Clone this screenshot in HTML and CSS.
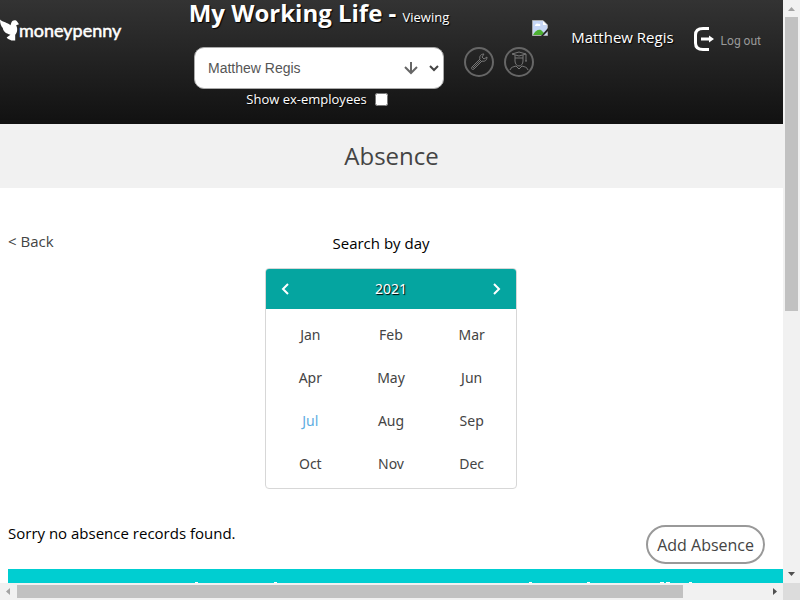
FILE: index.html
```html
<!DOCTYPE html>
<html lang="en">
<head>
<meta charset="utf-8">
<meta name="viewport" content="width=device-width, initial-scale=1">
<title>Absence</title>
<link rel="stylesheet" href="styles.css">
</head>
<body>
<div class="frame">
  <div class="page">
    <header class="top">
      <a class="logo" href="#" aria-label="Home">
        <svg class="bird" viewBox="0 0 20 22" aria-hidden="true"><path d="M0 0C3 3 8 3 11 6L12 3C13 0 17 0 18 2L20 5L17 6C19 10 18 14 16 16V22H12C10 21 8 21 7 19L11 16C6 15 3 12 3 9C1 7 0 4 0 0Z"/></svg>
        <span>moneypenny</span>
      </a>
      <div class="viewer">
        <h1>My Working Life - <small>Viewing</small></h1>
        <div class="picker">
          <select aria-label="Employee"><option>Matthew Regis</option></select>
          <svg class="arrows" viewBox="0 0 36 14" aria-hidden="true"><path d="M7 1V12M1 6L7 12L13 6"/><path class="chev" d="M26 5L30 9L34 5"/></svg>
        </div>
        <label class="ex">Show ex-employees <input type="checkbox"></label>
      </div>
      <nav class="tools">
        <a href="#" aria-label="Settings"><svg viewBox="0 0 30 30"><circle class="ring" cx="15" cy="15" r="14"/><path d="M8 20L16 12C15 9 17 7 20 7L18 10L20 12L23 10C23 13 21 15 18 14L10 22C8 23 7 22 8 20ZM9 21L17 13"/></svg></a>
        <a href="#" aria-label="Training"><svg viewBox="0 0 30 30"><circle class="ring" cx="15" cy="15" r="14"/><path d="M8 7L15 5L22 7L15 9ZM11 8V14C11 17 13 19 15 19S19 17 19 14V8M11 11H19M22 7V14M21 14H23M6 23C7 20 9 20 12 19L15 22L18 19C21 20 23 20 24 23"/></svg></a>
      </nav>
      <div class="user">
        <svg class="photo" viewBox="0 0 16 16" aria-hidden="true"><path fill="#c6d6f5" stroke="#aaa" d="M.5 .5H11L15.500 5V15.500H.5Z"/><path fill="#fff" d="M3 6C3 4 5 3 6 4C8 3 9 5 8 6ZM11 1V5H15Z"/><path fill="#4caf32" d="M1 15C3 11 6 9 9 10L12 13L10 15Z"/><path fill="#222" d="M16 8V11L11 16H9Z"/></svg>
        <span class="name">Matthew Regis</span>
        <a class="logout" href="#"><svg viewBox="0 0 20 24" aria-hidden="true"><path class="door" d="M15 1.500H9C4 1.500 1.500 4 1.500 8V16C1.500 20 4 22.500 9 22.500H15"/><path class="exit" d="M7 10.500H15V8.500L20 12L15 15.500V13.500H7Z"/></svg><span>Log out</span></a>
      </div>
    </header>
    <h2 class="heading">Absence</h2>
    <main>
      <div class="search">
        <a class="back" href="#">&lt; Back</a>
        <section class="finder">
          <p>Search by day</p>
          <div class="calendar">
            <div class="year">
              <button aria-label="Previous year"><svg viewBox="0 0 8 12"><path d="M7 1L2 6L7 11"/></svg></button>
              <span>2021</span>
              <button aria-label="Next year"><svg viewBox="0 0 8 12"><path d="M1 1L6 6L1 11"/></svg></button>
            </div>
            <div class="months">
              <button>Jan</button><button>Feb</button><button>Mar</button>
              <button>Apr</button><button>May</button><button>Jun</button>
              <button class="current">Jul</button><button>Aug</button><button>Sep</button>
              <button>Oct</button><button>Nov</button><button>Dec</button>
            </div>
          </div>
        </section>
      </div>
      <div class="records">
        <p>Sorry no absence records found.</p>
        <button class="add">Add Absence</button>
      </div>
      <div class="band"><svg viewBox="0 0 775 14" preserveAspectRatio="xMinYMin" aria-hidden="true"><path d="M187 13h3v1h-3zM266 13h3v1h-3zM521 13h3v1h-3zM579 13h3v1h-3zM652 13h4v1h-4zM658 13h4v1h-4zM681 13h3v1h-3z"/></svg></div>
    </main>
  </div>
  <div class="vbar"><svg viewBox="0 0 17 17"><path class="off" d="M5 11L8.500 7L12 11Z"/></svg><i></i><svg viewBox="0 0 17 17"><path d="M5 6L8.500 10L12 6Z"/></svg></div>
  <div class="hbar"><svg viewBox="0 0 17 17"><path class="off" d="M10 5L6 8.500L10 12Z"/></svg><i></i><svg viewBox="0 0 17 17"><path d="M7 5L11 8.500L7 12Z"/></svg></div>
  <div class="corner"></div>
</div>
</body>
</html>
```
FILE: styles.css
```css
* { box-sizing: border-box; }
body { margin: 0; font: 15px/20px "Trebuchet MS", "Open Sans", sans-serif; color: #000; background: #fff; }
button { font: inherit; color: inherit; border: 0; padding: 0; background: none; }
a { color: inherit; text-decoration: none; }
svg { display: block; flex: none; }
h1, h2, p { margin: 0; font-weight: 400; }
.frame { display: grid; grid-template: minmax(0, 1fr) 17px / minmax(0, 1fr) 17px; height: 100vh; }
.page { overflow: hidden; }

.top { display: flex; height: 124px; background: linear-gradient(#333, #111); color: #fff; text-shadow: 1px 1px 1px #000; }
.logo { display: flex; flex: 0 0 184px; padding-top: 19px; font: 18px/22px Lato, sans-serif; -webkit-text-stroke: 0.5px #fff; text-shadow: none; }
.bird { width: 19px; height: 22px; fill: #fff; }
.viewer { flex: 0 0 270px; text-align: center; }
h1 { height: 28px; font-size: 24px; line-height: 26px; font-weight: 700; white-space: nowrap; }
h1 small { font-size: 13px; font-weight: 500; }
.picker { position: relative; width: 250px; margin: 19px auto 0; }
select { appearance: none; display: block; width: 100%; height: 42px; padding: 0 13px; border: 1px solid #aaa; border-radius: 10px; background: #fff; color: #555; font: 14px "Liberation Sans", sans-serif; }
.arrows { position: absolute; right: 4px; top: 14px; width: 36px; height: 14px; fill: none; stroke: #666; stroke-width: 2; pointer-events: none; }
.chev { stroke: #444; }
.ex { display: flex; justify-content: center; align-items: center; gap: 8px; padding-right: 4px; font-size: 13px; line-height: 20px; font-weight: 500; }
.ex input { margin: 0; width: 13px; height: 13px; }
.tools { display: flex; gap: 10px; margin: 47px -2px 0 10px; }
.tools svg { width: 30px; height: 30px; fill: none; stroke: #777; }
.tools .ring { stroke: #666; stroke-width: 2; }
.user { display: flex; flex: 1; align-items: flex-start; padding: 20px 22px 0 0; }
.photo { width: 16px; height: 16px; }
.name { margin: 7px 20px 0 auto; font-weight: 500; }
.logout { display: flex; align-items: flex-end; gap: 7px; margin-top: 7px; color: #999; font: 12px/20px Roboto, sans-serif; text-shadow: none; }
.logout svg { width: 20px; height: 24px; }
.door { fill: none; stroke: #fff; stroke-width: 3; }
.exit { fill: #fff; }

.heading { background: #f1f1f1; color: #444; font-size: 24px; line-height: 64px; text-align: center; }
main { padding: 43px 0 0 8px; }
.search { display: grid; grid-template-columns: 1fr 252px 1fr; padding-right: 9px; }
.back { color: #444; }
.finder { text-align: center; padding-top: 2px; }
.finder p { padding-right: 20px; }
.calendar { margin-top: 15px; border: 1px solid #d7d7d7; border-radius: 4px; overflow: hidden; font: 14px/20px Tahoma, "Noto Sans", sans-serif; color: #444; }
.year { display: flex; align-items: center; justify-content: space-between; height: 40px; padding: 0 15px; background: #05a5a0; color: #fff; text-shadow: 1px 1px 1px #000; }
.year svg { width: 8px; height: 12px; fill: none; stroke: #fff; stroke-width: 2; }
.months { display: grid; grid-template-columns: repeat(3, 1fr); padding: 4px 4px 3px; }
.months button { height: 43px; }
.months .current { color: #5dade2; }
.records { display: flex; justify-content: space-between; padding: 34px 18px 0 0; }
.add { height: 39px; margin-top: 2px; padding: 0 9px; border: 2px solid #999; border-radius: 20px; color: #444; font-size: 16px; }
.band { height: 60px; margin-top: 5px; background: #00ced1; }
.band svg { width: 775px; height: 14px; fill: #fff; }

.vbar, .hbar { display: flex; background: #f1f1f1; fill: #505050; }
.vbar { flex-direction: column; justify-content: space-between; }
.hbar { justify-content: space-between; }
.vbar svg, .hbar svg { width: 17px; height: 17px; }
.off { fill: #a3a3a3; }
.vbar i { height: 50.4%; margin: 0 2px auto; background: #c1c1c1; }
.hbar i { width: 85%; margin: 2px auto 2px 0; background: #c1c1c1; }
.corner { background: #dcdcdc; }
```
